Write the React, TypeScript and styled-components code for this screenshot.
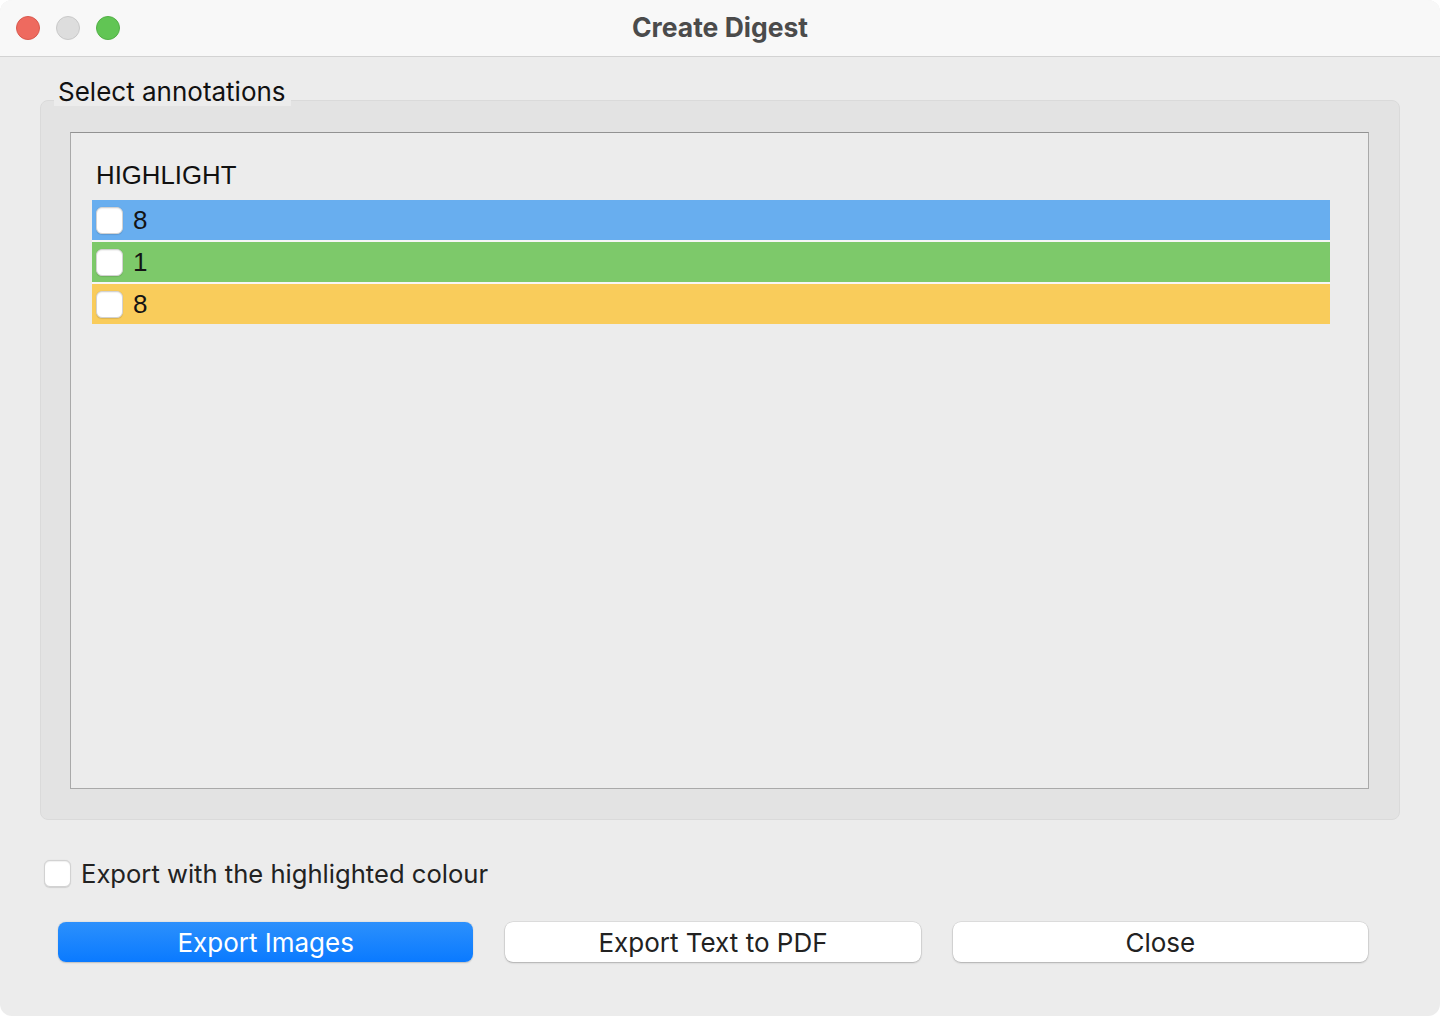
import styled, { createGlobalStyle } from 'styled-components';

const GlobalStyle = createGlobalStyle`
    html, body {
        margin: 0;
        padding: 0;
        background: #ffffff;
    }
    * {
        box-sizing: border-box;
    }
`;

const Window = styled.div`
    width: 1440px;
    height: 1016px;
    border-radius: 12px;
    overflow: hidden;
    background-color: #ececec;
    display: flex;
    flex-direction: column;
    font-family: Inter, "Noto Sans", sans-serif;
    color: #1f1f1f;
`;

const TitleBar = styled.div`
    height: 57px;
    flex-shrink: 0;
    display: grid;
    grid-template-columns: 1fr auto 1fr;
    align-items: center;
    background-color: #f8f8f8;
    border-bottom: 1px solid #d3d3d3;
`;

const Lights = styled.div`
    display: flex;
    gap: 16px;
    padding-left: 16px;
`;

const Light = styled.span<{ $fill: string; $edge: string }>`
    width: 24px;
    height: 24px;
    border-radius: 50%;
    background-color: ${p => p.$fill};
    border: 1px solid ${p => p.$edge};
`;

const Title = styled.div`
    font-size: 26.5px;
    font-weight: 700;
    color: #4b4b4b;
    margin: 0 0 2px 0;
`;

const Body = styled.div`
    flex: 1;
    display: flex;
    flex-direction: column;
    padding: 21px 40px 0 40px;
`;

const Group = styled.section`
    display: flex;
    flex-direction: column;
`;

const GroupLabel = styled.div`
    align-self: flex-start;
    position: relative;
    z-index: 1;
    margin: 0 0 -6px 14px;
    padding: 0 5px 0 4px;
    height: 28px;
    line-height: 27px;
    font-size: 26px;
    background-color: #ececec;
    color: #111;
`;

const GroupBox = styled.div`
    height: 720px;
    background-color: #e3e3e3;
    border: 1px solid #dadada;
    border-radius: 8px;
    padding: 31px 30px 30px 29px;
    display: flex;
`;

const List = styled.div`
    flex: 1;
    background-color: #ececec;
    border: 1px solid #a9a9a9;
    border-top-color: #929292;
    padding: 27px 38px 0 21px;
    display: flex;
    flex-direction: column;
    font-family: "Liberation Sans", Arial, sans-serif;
`;

const Heading = styled.div`
    height: 32px;
    line-height: 30px;
    font-size: 25.8px;
    margin: 0 0 8px 4px;
    color: #111;
`;

const Rows = styled.div`
    display: flex;
    flex-direction: column;
    gap: 2px;
    background-color: #f6f6f6;
`;

const Row = styled.div<{ $color: string }>`
    height: 40px;
    display: flex;
    align-items: center;
    gap: 10px;
    padding-left: 4px;
    background-color: ${p => p.$color};
    font-size: 26px;
    color: #141414;
`;

const Check = styled.span`
    width: 27px;
    height: 27px;
    flex-shrink: 0;
    border-radius: 6px;
    background-color: #ffffff;
    border: 1px solid #d2d2d2;
    box-shadow: inset 0 1px 1px rgba(0, 0, 0, 0.06), 0 0.5px 1px rgba(0, 0, 0, 0.12);
`;

const Option = styled.label`
    display: flex;
    align-items: center;
    gap: 10px;
    margin: 39px 0 0 4px;
    height: 28px;
    font-size: 25.6px;
    color: #222;
`;

const Buttons = styled.div`
    display: grid;
    grid-template-columns: repeat(3, 1fr);
    gap: 32px;
    margin: 35px 32px 0 18px;
`;

const Button = styled.button<{ $primary?: boolean }>`
    height: 40px;
    border: none;
    border-radius: 8px;
    font-family: Inter, "Noto Sans", sans-serif;
    font-size: 26px;
    color: ${p => (p.$primary ? '#ffffff' : '#222222')};
    background: ${p => (p.$primary ? 'linear-gradient(#2c90fc, #0a7aff)' : '#ffffff')};
    box-shadow: ${p =>
        p.$primary
            ? '0 0.5px 1.5px rgba(0, 0, 0, 0.2)'
            : '0 0 0 0.5px rgba(0, 0, 0, 0.12), 0 1px 2px rgba(0, 0, 0, 0.22)'};
    padding: 0;
`;

const annotations = [
    { id: 'blue', color: '#68aeef', count: 8 },
    { id: 'green', color: '#7dc96a', count: 1 },
    { id: 'yellow', color: '#f9cc5b', count: 8 },
];

export default function App() {
    return (
        <>
            <GlobalStyle />
            <Window>
                <TitleBar>
                    <Lights>
                        <Light $fill="#ee6a5f" $edge="#d9594e" />
                        <Light $fill="#dddddd" $edge="#c9c9c9" />
                        <Light $fill="#61c554" $edge="#52b046" />
                    </Lights>
                    <Title>Create Digest</Title>
                    <div />
                </TitleBar>
                <Body>
                    <Group>
                        <GroupLabel>Select annotations</GroupLabel>
                        <GroupBox>
                            <List>
                                <Heading>HIGHLIGHT</Heading>
                                <Rows>
                                    {annotations.map(a => (
                                        <Row key={a.id} $color={a.color}>
                                            <Check />
                                            {a.count}
                                        </Row>
                                    ))}
                                </Rows>
                            </List>
                        </GroupBox>
                    </Group>
                    <Option>
                        <Check />
                        Export with the highlighted colour
                    </Option>
                    <Buttons>
                        <Button $primary>Export Images</Button>
                        <Button>Export Text to PDF</Button>
                        <Button>Close</Button>
                    </Buttons>
                </Body>
            </Window>
        </>
    );
}
